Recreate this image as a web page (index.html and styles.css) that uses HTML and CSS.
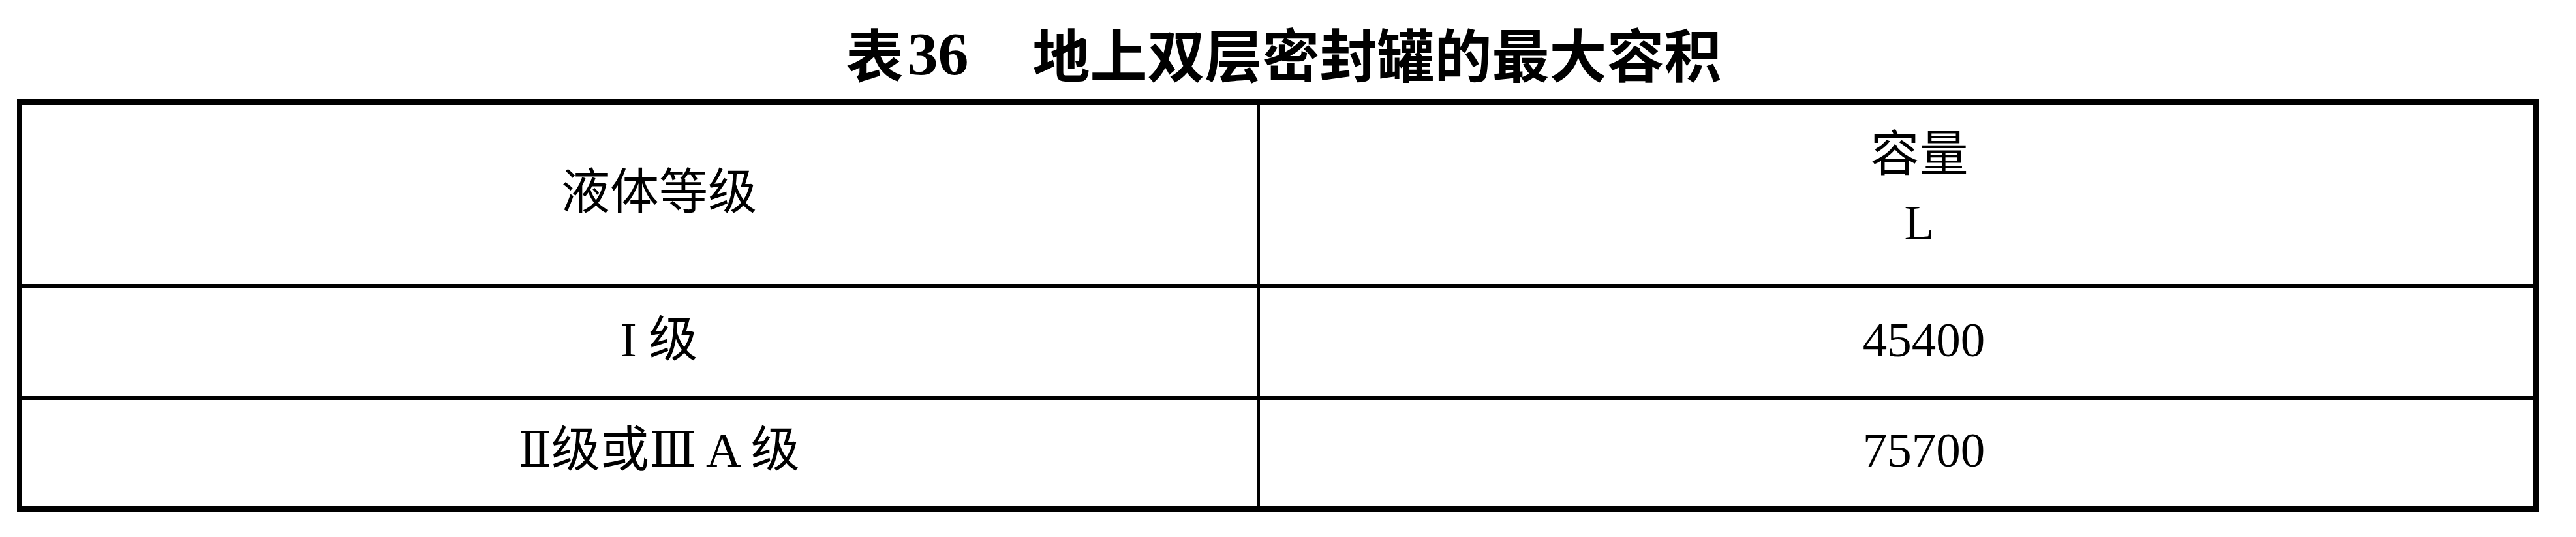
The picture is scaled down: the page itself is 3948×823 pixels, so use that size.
FILE: index.html
```html
<!DOCTYPE html>
<html lang="zh-CN">
<head>
<meta charset="utf-8">
<title>表 36 地上双层密封罐的最大容积</title>
<link rel="stylesheet" href="styles.css">
</head>
<body>
<div class="page">
  <h1 class="title"><span class="t-lead">表</span><span class="t-num">36</span><span class="t-text">地上双层密封罐的最大容积</span></h1>
  <div class="grid" role="table">
    <div class="cell left head" role="columnheader">液体等级</div>
    <div class="cell right head two" role="columnheader"><span>容量</span><span>L</span></div>
    <div class="cell left mid" role="cell">I 级</div>
    <div class="cell right mid" role="cell">45400</div>
    <div class="cell left last" role="cell">Ⅱ级或Ⅲ A 级</div>
    <div class="cell right last" role="cell">75700</div>
  </div>
</div>
</body>
</html>
```

FILE: styles.css
```css
html, body {
  margin: 0;
  padding: 0;
  background: #ffffff;
  color: #000000;
}

.page {
  padding-left: 26px;
  width: 3865px;
}

.title {
  margin: 36px 0 28px;
  padding-left: 18px;
  text-align: center;
  font-family: "Noto Sans CJK SC", sans-serif;
  font-weight: 700;
  font-size: 88px;
  line-height: 88px;
  white-space: nowrap;
}

.t-num {
  font-family: "Liberation Serif", serif;
  font-weight: 700;
  font-size: 94px;
  line-height: 40px;
  margin-left: 6px;
  margin-right: 98px;
  vertical-align: 4px;
}

.grid {
  box-sizing: border-box;
  width: 3865px;
  display: grid;
  grid-template-columns: 1898px 1951px;
  grid-template-rows: 281px 171px 162px;
  border-style: solid;
  border-color: #000;
  border-width: 9px 9px 10px 7px;
  font-family: "Liberation Serif", "DejaVu Serif", "Noto Sans CJK SC", serif;
  font-size: 75px;
  line-height: 106px;
}

.cell {
  box-sizing: border-box;
  display: flex;
  flex-direction: column;
  align-items: center;
  justify-content: center;
  padding-left: 60px;
  padding-bottom: 8px;
  white-space: nowrap;
}

.left {
  border-right: 4px solid #000;
}

.right {
  padding-left: 84px;
}

.head,
.mid {
  border-bottom: 6px solid #000;
}

.two {
  line-height: 104px;
  padding-left: 70px;
  padding-top: 0;
  padding-bottom: 20px;
}
```
